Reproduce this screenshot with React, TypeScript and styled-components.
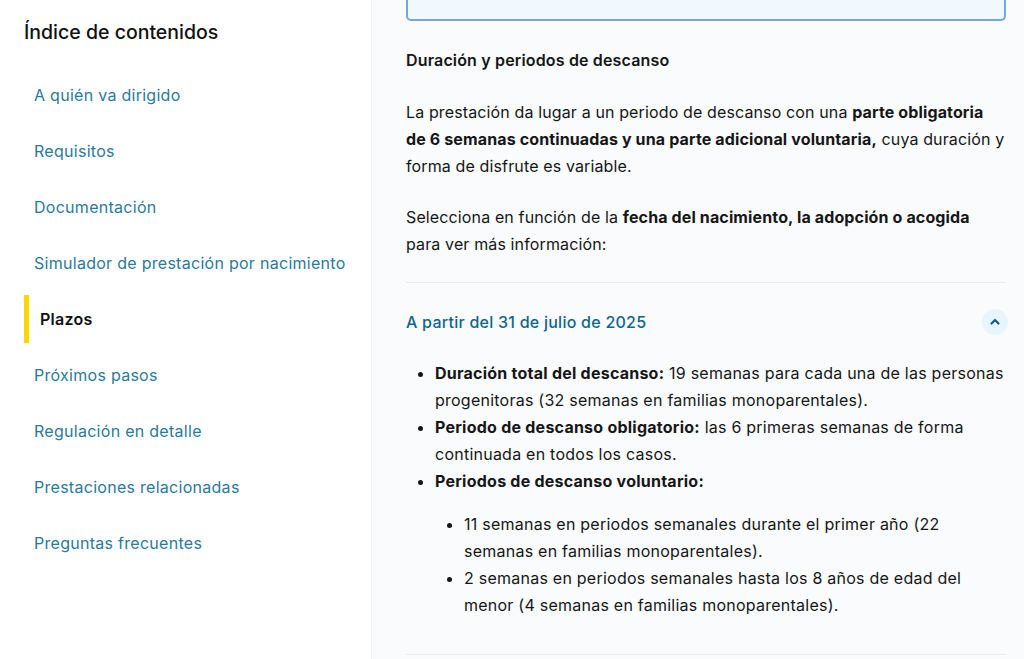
import styled, { createGlobalStyle } from 'styled-components'

const GlobalStyle = createGlobalStyle`
  html, body {
    margin: 0;
    padding: 0;
    height: 100%;
    overflow: hidden;
  }
  body {
    font-family: Inter, "Noto Sans", "Liberation Sans", sans-serif;
    color: #161616;
    background: #fff;
  }
`

const Page = styled.div`
  display: flex;
  height: 659px;
`

const Sidebar = styled.aside`
  width: 372px;
  flex-shrink: 0;
  border-right: 1px solid #eceff3;
  background: #fff;
  padding: 18px 0 0 24px;
  box-sizing: border-box;
`

const SideTitle = styled.h2`
  font-size: 19.5px;
  font-weight: 500;
  line-height: 28px;
  margin: 0 0 25px;
  color: #111;
`

const NavList = styled.nav`
  display: flex;
  flex-direction: column;
  gap: 8px;
`

const NavItem = styled.a<{ $active?: boolean }>`
  display: flex;
  align-items: center;
  height: 48px;
  font-size: 16px;
  letter-spacing: 0.28px;
  text-decoration: none;
  box-sizing: border-box;
  padding-left: ${p => (p.$active ? '11px' : '10px')};
  border-left: ${p => (p.$active ? '5px solid #ffd700' : 'none')};
  color: ${p => (p.$active ? '#111' : '#2a7a9b')};
  font-weight: ${p => (p.$active ? 600 : 400)};
`

const Main = styled.main`
  flex: 1;
  background: #f9fbfd;
  padding: 0 17px 0 34px;
  letter-spacing: 0.13px;
`

const NoticeBox = styled.div`
  height: 21px;
  box-sizing: border-box;
  background: #f2f9fe;
  border: 2px solid #71a8e0;
  border-top: none;
  border-radius: 0 0 5px 5px;
  margin-right: 1px;
`

const Heading = styled.h3`
  font-size: 16px;
  font-weight: 600;
  line-height: 27px;
  letter-spacing: 0.16px;
  margin: 26px 0 25px;
`

const Paragraph = styled.p`
  font-size: 16px;
  line-height: 27px;
  margin: 0 0 24px;
`

const Divider = styled.hr`
  border: none;
  border-top: 1px solid #e8ecf0;
  margin: 0 1px 0 0;
`

const AccordionHeader = styled.div`
  display: flex;
  align-items: center;
  justify-content: space-between;
  height: 77px;
  font-size: 16px;
  font-weight: 500;
  letter-spacing: 0.25px;
  color: #10658b;
`

const ChevronButton = styled.span`
  display: flex;
  align-items: center;
  justify-content: center;
  width: 26px;
  height: 26px;
  margin-right: -1px;
  border-radius: 50%;
  background: #e9f5fc;
  color: #0f5f85;
`

const AccordionBody = styled.div`
  padding: 0 0 35px;
`

const List = styled.ul<{ $nested?: boolean }>`
  margin: ${p => (p.$nested ? '16px 0 0' : '0')};
  padding-left: 29px;
  list-style: disc;
  font-size: 16px;
  line-height: 27px;
  letter-spacing: 0.24px;
`

const Item = styled.li``

const ChevronUp = () => (
  <svg width="12" height="12" viewBox="0 0 12 12" fill="none">
    <path d="M2.5 7.5 6 4l3.5 3.5" stroke="currentColor" strokeWidth="2.2" strokeLinecap="round" strokeLinejoin="round" />
  </svg>
)

const sections = [
  'A quién va dirigido',
  'Requisitos',
  'Documentación',
  'Simulador de prestación por nacimiento',
  'Plazos',
  'Próximos pasos',
  'Regulación en detalle',
  'Prestaciones relacionadas',
  'Preguntas frecuentes',
]

export default function App() {
  return (
    <>
      <GlobalStyle />
      <Page>
        <Sidebar>
          <SideTitle>Índice de contenidos</SideTitle>
          <NavList>
            {sections.map(s => (
              <NavItem key={s} href="#" $active={s === 'Plazos'}>
                {s}
              </NavItem>
            ))}
          </NavList>
        </Sidebar>
        <Main>
          <NoticeBox />
          <Heading>Duración y periodos de descanso</Heading>
          <Paragraph>
            La prestación da lugar a un periodo de descanso con una{' '}
            <b>parte obligatoria de 6 semanas continuadas y una parte adicional voluntaria,</b> cuya
            duración y forma de disfrute es variable.
          </Paragraph>
          <Paragraph>
            Selecciona en función de la <b>fecha del nacimiento, la adopción o acogida</b> para ver
            más información:
          </Paragraph>
          <Divider />
          <AccordionHeader>
            A partir del 31 de julio de 2025
            <ChevronButton>
              <ChevronUp />
            </ChevronButton>
          </AccordionHeader>
          <AccordionBody>
            <List>
              <Item>
                <b>Duración total del descanso:</b> 19 semanas para cada una de las personas
                progenitoras (32 semanas en familias monoparentales).
              </Item>
              <Item>
                <b>Periodo de descanso obligatorio:</b> las 6 primeras semanas de forma continuada
                en todos los casos.
              </Item>
              <Item>
                <b>Periodos de descanso voluntario:</b>
                <List $nested>
                  <Item>
                    11 semanas en periodos semanales durante el primer año (22 semanas en familias
                    monoparentales).
                  </Item>
                  <Item>
                    2 semanas en periodos semanales hasta los 8 años de edad del menor (4 semanas en
                    familias monoparentales).
                  </Item>
                </List>
              </Item>
            </List>
          </AccordionBody>
          <Divider />
        </Main>
      </Page>
    </>
  )
}
